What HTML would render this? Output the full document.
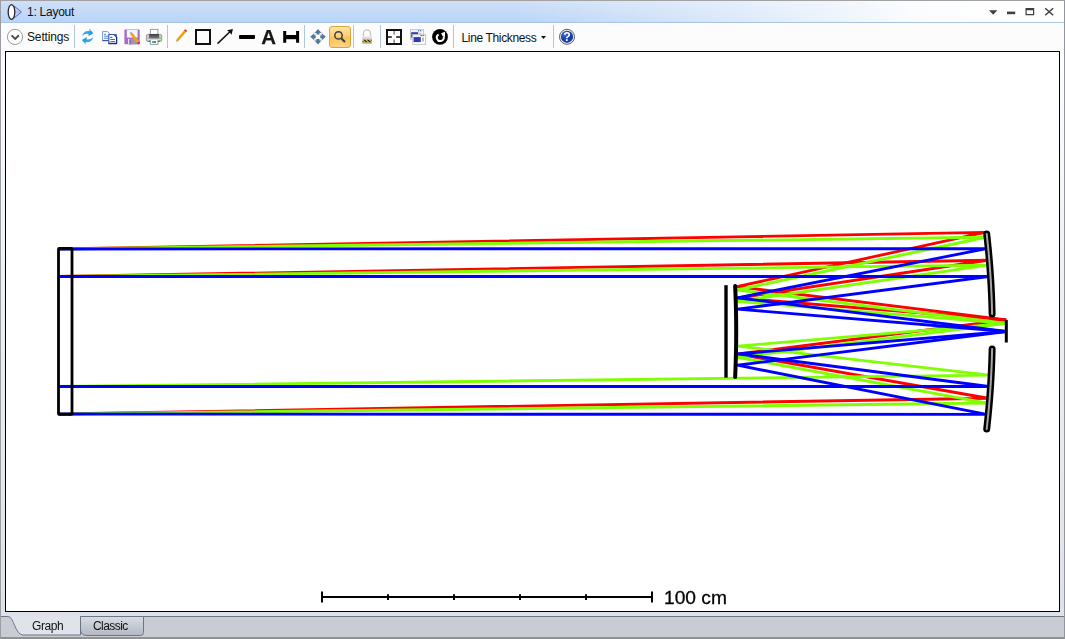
<!DOCTYPE html>
<html><head><meta charset="utf-8"><title>1: Layout</title>
<style>
html,body{margin:0;padding:0}
body{width:1065px;height:639px;position:relative;overflow:hidden;background:#dfe3e9;font-family:"Liberation Sans",Arial,sans-serif;font-size:12px;color:#111}
.abs{position:absolute}
#frame{left:0;top:0;width:1063px;height:636px;border:1px solid #9a9ea4;border-top-color:#a2a2a2;border-right-color:#92969c;border-bottom:2px solid #919191}
#title{left:1px;top:1px;width:1063px;height:21px;border-bottom:1px solid #a9c5e3;
 background:linear-gradient(to right,rgba(255,255,255,0) 0%,rgba(255,255,255,0) 48%,rgba(255,255,255,.5) 70%,rgba(255,255,255,.92) 86%,#fff 94%),linear-gradient(to bottom,#cfe0f8,#b9d4f7)}
#ttext{left:27px;top:5px;line-height:14px;letter-spacing:-.25px;color:#111;white-space:nowrap}
#toolbar{left:1px;top:23px;width:1063px;height:28px;background:#fcfcfc}
#margin{left:1px;top:50px;width:1063px;height:566px;background:linear-gradient(to bottom,#fdfdfd 0%,#eceef1 46%,#dee2e8 100%)}
.sep{width:1px;height:23px;top:25px;background:#b0c4db}
#canvas{left:5px;top:51px;width:1053px;height:559px;border:1px solid #000;background:#fff}
#tabbar{left:1px;top:617px;width:1063px;height:21px;background:#c9ccd3}
.t{white-space:nowrap;line-height:14px}
svg{position:absolute;left:0;top:0}
</style></head><body>
<div class="abs" id="title"></div>
<div class="abs" id="toolbar"></div>
<div class="abs" id="margin"></div>
<div class="abs" id="tabbar"></div>
<div class="abs" id="canvas"></div>
<div class="abs sep" style="left:74px"></div>
<div class="abs sep" style="left:167px"></div>
<div class="abs sep" style="left:304px"></div>
<div class="abs sep" style="left:353px"></div>
<div class="abs sep" style="left:380px"></div>
<div class="abs sep" style="left:453px"></div>
<div class="abs sep" style="left:553px"></div>
<div class="abs" id="zoombtn" style="left:329px;top:26px;width:20px;height:20px;border:1px solid #d8a73a;border-radius:3px;background:linear-gradient(to bottom,#fde3a8 0%,#fdcf73 45%,#fdc04f 50%,#fdd587 100%)"></div>
<div class="abs t" id="ttext">1: Layout</div>
<div class="abs t" style="left:27px;top:30px;letter-spacing:-.15px">Settings</div>
<div class="abs t" style="left:461.5px;top:31px;letter-spacing:-.35px">Line Thickness</div>
<svg width="1065" height="639" viewBox="0 0 1065 639">
<defs>
<linearGradient id="gBlue" x1="0" y1="0" x2="1" y2="1"><stop offset="0" stop-color="#5cc0f8"/><stop offset="1" stop-color="#1187dc"/></linearGradient>
<linearGradient id="gPr" x1="0" y1="0" x2="0" y2="1"><stop offset="0" stop-color="#3c3c3c"/><stop offset="1" stop-color="#7d7d7d"/></linearGradient>
<linearGradient id="gTab" x1="0" y1="0" x2="0" y2="1"><stop offset="0" stop-color="#d9dce3"/><stop offset="1" stop-color="#b3b8c3"/></linearGradient>
<radialGradient id="gHelp" cx=".35" cy=".3" r=".8"><stop offset="0" stop-color="#3f70dc"/><stop offset=".6" stop-color="#1436a8"/><stop offset="1" stop-color="#1e48c0"/></radialGradient>
<linearGradient id="gLock" x1="0" y1="0" x2="0" y2="1"><stop offset="0" stop-color="#e6e6e6"/><stop offset="1" stop-color="#a9adb3"/></linearGradient>
</defs>
<!-- app icon -->
<path d="M14.3 6.2L21.4 12L14.3 17.8Z" fill="#c3d2f4" stroke="#5161c4" stroke-width="1"/>
<path d="M14.5 12H20.5" stroke="#8ea0e0" stroke-width=".8"/>
<ellipse cx="11.5" cy="12" rx="3.3" ry="7.4" fill="#fff" stroke="#2b2b2b" stroke-width="1.3"/>
<!-- window controls -->
<path d="M989 10.2H997.4L993.2 14.8Z" fill="#3f3f3f"/>
<rect x="1007" y="11.6" width="8.2" height="2.6" fill="#3f3f3f"/>
<path d="M1025.5 8H1034.2V15.3H1025.5ZM1026.7 10.2V14.1H1033V10.2Z" fill="#3f3f3f" fill-rule="evenodd"/>
<path d="M1045.2 8.2L1053.2 15.2M1053.2 8.2L1045.2 15.2" stroke="#3f3f3f" stroke-width="1.5" fill="none"/>
<!-- settings button -->
<circle cx="15" cy="36.9" r="7.6" fill="#fff" stroke="#9c9c9c" stroke-width="1"/>
<path d="M11.6 35.3L15.2 38.9L18.9 35.3" fill="none" stroke="#4a4a4a" stroke-width="1.9"/>
<!-- refresh -->
<g fill="url(#gBlue)">
<path d="M82 36C83 32 86 30.3 89.6 31.1L89.3 28.6L93.3 33.2L88.2 36.3L88.7 34C86.5 33.4 84 34.3 82 36Z"/>
<path transform="rotate(180 87.6 36.6)" d="M82 36C83 32 86 30.3 89.6 31.1L89.3 28.6L93.3 33.2L88.2 36.3L88.7 34C86.5 33.4 84 34.3 82 36Z"/>
</g>
<!-- copy -->
<path d="M102.6 31.6H107.6L109.6 33.8V40.4H102.6Z" fill="#fff" stroke="#7f93c6" stroke-width="1"/>
<path d="M102.3 40.7H109.8" stroke="#33467c" stroke-width="1"/>
<path d="M104 34.3H106M104 36.2H108.5M104 38.2H108.5" stroke="#4f85e0" stroke-width="1"/>
<path d="M108.8 34.5H113.8L116.5 37V43.4H108.8Z" fill="#fff" stroke="#3152b4" stroke-width="1.1"/>
<path d="M113.6 34.3L116.8 37.2V34.3Z" fill="#2b49a6"/>
<path d="M108.5 43.6H117M116.6 37V43.6" stroke="#1c2f86" stroke-width="1.3" fill="none"/>
<path d="M110.3 37.4H112.3M110.3 39.5H115M110.3 41.5H115" stroke="#3a6fd8" stroke-width="1.1"/>
<!-- save -->
<rect x="124.4" y="29.5" width="15.3" height="14.8" rx="1" fill="#a56bcb"/>
<rect x="126.8" y="30" width="10.8" height="7.6" fill="#eef5fd"/>
<rect x="128" y="39" width="8.3" height="5.3" fill="#9a9ca8"/>
<rect x="128" y="39" width="1.4" height="5.3" fill="#e9e9f0"/>
<rect x="129.4" y="39.6" width="1.7" height="4.7" fill="#9a62c2"/>
<path d="M131.3 33.6L138.6 42.9" stroke="#f4a312" stroke-width="2.6"/>
<path d="M130 31.9L132.4 32.8L130.6 34.4Z" fill="#9c9c8c"/>
<path d="M138 42.2L139.2 43.7" stroke="#e02a18" stroke-width="2.6"/>
<!-- printer -->
<rect x="150.4" y="29.4" width="7.5" height="5.5" fill="#fff" stroke="#9b9b9b" stroke-width="1"/>
<rect x="146.4" y="34.4" width="15.3" height="7" rx="1.5" fill="#cdd1d6" stroke="#8d8d8d" stroke-width=".9"/>
<path d="M149.4 33.9H158.8L159.6 38.8H148.6Z" fill="url(#gPr)"/>
<rect x="150.3" y="39.4" width="7.6" height="5" fill="#fff" stroke="#9b9b9b" stroke-width="1"/>
<rect x="148.6" y="38.8" width="11" height="1" fill="#dfe5ee"/>
<path d="M149.2 40.2L150 41.6H148.6ZM159 40.2L159.7 41.6H158.3Z" fill="#222"/>
<rect x="152" y="41.2" width="2" height="1.6" fill="#2a8fe6"/><rect x="154" y="41.2" width="2" height="1.6" fill="#157a3c"/>
<circle cx="160.5" cy="38.3" r=".7" fill="#7be05a"/>
<!-- pencil -->
<path d="M177.4 40.3L185.6 30.6" stroke="#f5a800" stroke-width="2.5"/>
<path d="M177.4 40.3L185.6 30.6" stroke="#e07d00" stroke-width=".7" stroke-dasharray="1 1"/>
<path d="M185.2 31.1L186.1 30" stroke="#e3241c" stroke-width="2.5"/>
<path d="M176.2 41.8L176.6 39.5L178.3 41Z" fill="#8f8f78"/>
<!-- square -->
<rect x="196" y="30" width="14" height="14" fill="none" stroke="#111" stroke-width="2"/>
<!-- arrow -->
<path d="M217.5 43.6L231 30.8" stroke="#111" stroke-width="1.5"/>
<path d="M232.9 29L227 30.2L229.6 32.2L231.6 34.8Z" fill="#111"/>
<!-- thick line -->
<rect x="239" y="35" width="16" height="3.9" rx=".8" fill="#000"/>
<!-- A -->
<text x="261.2" y="43.8" font-family="Liberation Sans,Arial,sans-serif" font-weight="bold" font-size="20.4" fill="#161616" stroke="#161616" stroke-width=".25" style="will-change:transform;opacity:.999">A</text>
<!-- H bar -->
<path d="M284.7 31V42.8M297.6 31V42.8" stroke="#000" stroke-width="3"/><path d="M284.7 37.1H297.6" stroke="#000" stroke-width="4.2"/>
<!-- move -->
<g fill="#4f7a97">
<path d="M318 29L321.5 33H319.5V34.5H316.5V33H314.5Z"/>
<path d="M318 44.6L321.5 40.6H319.5V39.1H316.5V40.6H314.5Z"/>
<path d="M310.2 36.8L314.2 33.3V35.3H315.7V38.3H314.2V40.3Z"/>
<path d="M325.8 36.8L321.8 33.3V35.3H320.3V38.3H321.8V40.3Z"/>
</g>
<path d="M313.6 32.6L315.8 34.8M322.4 32.6L320.2 34.8M313.6 41L315.8 38.8M322.4 41L320.2 38.8" stroke="#f0bcc4" stroke-width=".7"/>
<!-- magnifier -->
<circle cx="338.5" cy="35.4" r="3.7" fill="none" stroke="#3a3f4a" stroke-width="1.5"/>
<path d="M341.2 38.2L345 42" stroke="#3a3f4a" stroke-width="2"/>
<!-- lock -->
<path d="M363.4 36.6V33.6A3.55 3.8 0 0 1 370.5 33.6V36.6" fill="none" stroke="#c4c4c4" stroke-width="1.3"/>
<rect x="362.2" y="36.4" width="9.8" height="7.4" rx=".8" fill="url(#gLock)"/>
<rect x="362.6" y="39.7" width="9" height="2.5" fill="#eec01c"/>
<path d="M363.2 39.7L365.8 42.2H367.6L365 39.7ZM366.8 39.7L369.4 42.2H371.2L368.6 39.7ZM370.4 39.7L371.6 40.9V39.7ZM362.6 40.8L364 42.2H362.6Z" fill="#222"/>
<!-- cross square -->
<rect x="387" y="30" width="14" height="14" fill="#fff" stroke="#111" stroke-width="2"/>
<path d="M388 37.1H391.8M396.2 37.1H400" stroke="#111" stroke-width="1.5"/>
<path d="M394.1 31V34.6M394.1 39.4V43" stroke="#555" stroke-width="1.1"/>
<!-- windows -->
<rect x="410.5" y="29.6" width="13" height="9.6" fill="#fff" stroke="#c6c6c6" stroke-width="1"/>
<rect x="411.2" y="32.2" width="7" height="5.5" fill="#2c3cb2"/>
<rect x="411.2" y="30.3" width="11.8" height="1.4" fill="#e4e8f2"/>
<rect x="418" y="30.2" width="1.2" height="1.1" fill="#3a62b8"/><rect x="420" y="30.2" width="1.2" height="1.1" fill="#3a62b8"/>
<rect x="419.2" y="32.6" width="2.2" height="3" fill="#c2c2c2"/>
<rect x="412.8" y="34.6" width="12.8" height="9.8" fill="#fff" stroke="#c6c6c6" stroke-width="1"/>
<rect x="413.5" y="35.2" width="11.5" height="1.3" fill="#e4e8f2"/>
<rect x="420.6" y="35" width="1.2" height="1.1" fill="#3a62b8"/><rect x="422.6" y="35" width="1.2" height="1.1" fill="#3a62b8"/>
<rect x="413.6" y="37.1" width="7.2" height="5" fill="#2c3cb2"/>
<rect x="422" y="37.6" width="1.9" height="4" fill="#b5b5b5"/>
<!-- reset -->
<circle cx="440" cy="36.8" r="7.9" fill="#000"/>
<path d="M438.55 34.47A3.5 3.5 0 1 0 443.68 36.6" fill="none" stroke="#fff" stroke-width="1.9"/>
<path d="M441.1 33.3L445.1 31.7L444.9 37L442.7 36.2Z" fill="#fff"/>
<!-- dropdown -->
<path d="M541 36H546L543.5 39Z" fill="#111"/>
<!-- help -->
<circle cx="567" cy="36.8" r="7.5" fill="#f0f0f0" stroke="#5c5c5c" stroke-width="1"/>
<circle cx="567" cy="36.8" r="6.1" fill="url(#gHelp)"/>
<text x="567.1" y="41.3" text-anchor="middle" font-family="Liberation Sans,Arial,sans-serif" font-weight="bold" font-size="12.4" fill="#fff">?</text>
<!-- tabs -->
<path d="M1 616.5H8C14 616.5 15 635 23 635H80.5V616.5" fill="#e0e4ea"/>
<path d="M80.5 616.5H143.5V632.5Q143.500 635.5 140.500 635.5H87Q80.500 635.5 80.5 629Z" fill="url(#gTab)" stroke="#6d7686" stroke-width="1"/>
<path d="M1 616.5H8C14 616.5 15 635 23 635H80.5V616.5" fill="none" stroke="#6d7686" stroke-width="1"/>
<path d="M143.500 616.5H1064" stroke="#6d7686" stroke-width="1"/>

<g fill="none" stroke-width="2.9" stroke-linejoin="round" stroke-linecap="butt"><path d="M58.5 249 L984.72 232.42 L736.97 286.6 L1006.25 319.83" stroke="#ff0000"/><path d="M58.5 276.5 L987.52 260.28 L737.42 298.01 L1006.25 319.91" stroke="#ff0000"/><path d="M58.5 414 L987.88 398.2 L737.74 354.04 L1006.25 319.83" stroke="#ff0000"/><path d="M58.5 249 L985.28 237.26 L737.12 289.97 L1006.25 323.33" stroke="#7fff00"/><path d="M58.5 276.5 L987.91 265.14 L737.53 301.35 L1006.25 323.39" stroke="#7fff00"/><path d="M58.5 386.5 L989.38 375.13 L737.89 346.13 L1006.25 323.38" stroke="#7fff00"/><path d="M58.5 414 L987.49 403.07 L737.65 357.38 L1006.25 323.33" stroke="#7fff00"/><path d="M58.5 249 L986.46 248.58 L737.42 297.81 L1006.25 331.5" stroke="#0000ff"/><path d="M58.5 276.5 L988.72 276.5 L737.74 309.12 L1006.25 331.5" stroke="#0000ff"/><path d="M58.5 386.5 L988.72 386.5 L737.74 353.88 L1006.25 331.5" stroke="#0000ff"/><path d="M58.5 414 L986.46 414.42 L737.42 365.19 L1006.25 331.5" stroke="#0000ff"/></g><rect x="58.5" y="248.3" width="13.5" height="166.1" rx="1" fill="none" stroke="#000" stroke-width="2.8" stroke-linejoin="bevel"/><path d="M989.87 314 L989.69 306.73 L989.45 299.45 L989.14 292.18 L988.77 284.91 L988.34 277.64 L987.85 270.36 L987.3 263.09 L986.68 255.82 L986 248.55 L985.26 241.27 L984.46 234 A2.25 2.25 0 0 1 988.96 234 L988.96 234 L989.76 241.27 L990.5 248.55 L991.18 255.82 L991.8 263.09 L992.35 270.36 L992.84 277.64 L993.27 284.91 L993.64 292.18 L993.95 299.45 L994.19 306.73 L994.37 314 A2.25 2.25 0 0 1 989.87 314Z" fill="#a8a8a8" stroke="#000" stroke-width="2.5" stroke-linejoin="round"/><path d="M989.87 349 L989.69 356.27 L989.45 363.55 L989.14 370.82 L988.77 378.09 L988.34 385.36 L987.85 392.64 L987.3 399.91 L986.68 407.18 L986 414.45 L985.26 421.73 L984.46 429 A2.25 2.25 0 0 0 988.96 429 L988.96 429 L989.76 421.73 L990.5 414.45 L991.18 407.18 L991.8 399.91 L992.35 392.64 L992.84 385.36 L993.27 378.09 L993.64 370.82 L993.95 363.55 L994.19 356.27 L994.37 349 A2.25 2.25 0 0 0 989.87 349Z" fill="#a8a8a8" stroke="#000" stroke-width="2.5" stroke-linejoin="round"/><path d="M734.34 377 L734.69 368.73 L734.97 360.45 L735.18 352.18 L735.32 343.91 L735.39 335.64 L735.39 327.36 L735.32 319.09 L735.18 310.82 L734.97 302.55 L734.69 294.27 L734.34 286 A0.8 0.8 0 0 1 735.94 286 L735.94 286 L736.29 294.27 L736.57 302.55 L736.78 310.82 L736.92 319.09 L736.99 327.36 L736.99 335.64 L736.92 343.91 L736.78 352.18 L736.57 360.45 L736.29 368.73 L735.94 377 A0.8 0.8 0 0 1 734.34 377Z" fill="#000" stroke="#000" stroke-width="2.4" stroke-linejoin="round"/><path d="M726 285.2V377.6" stroke="#000" stroke-width="3.4"/><path d="M1006.3 320V342.5" stroke="#000" stroke-width="3"/><path d="M322 597H652M322 591.5V602.5M652 591.5V602.5M388 594.3V600M454 594.3V600M520 594.3V600M586 594.3V600" stroke="#000" stroke-width="2" fill="none"/><text x="664" y="604" font-family="Liberation Sans, Arial, sans-serif" font-size="19.2" fill="#000" stroke="#000" stroke-width=".3" style="will-change:transform;opacity:.999">100 cm</text>
</svg>
<div class="abs t" style="left:32px;top:619px;letter-spacing:-.4px">Graph</div>
<div class="abs t" style="left:93px;top:619px;letter-spacing:-.55px">Classic</div>
<div class="abs" id="frame"></div>
</body></html>
